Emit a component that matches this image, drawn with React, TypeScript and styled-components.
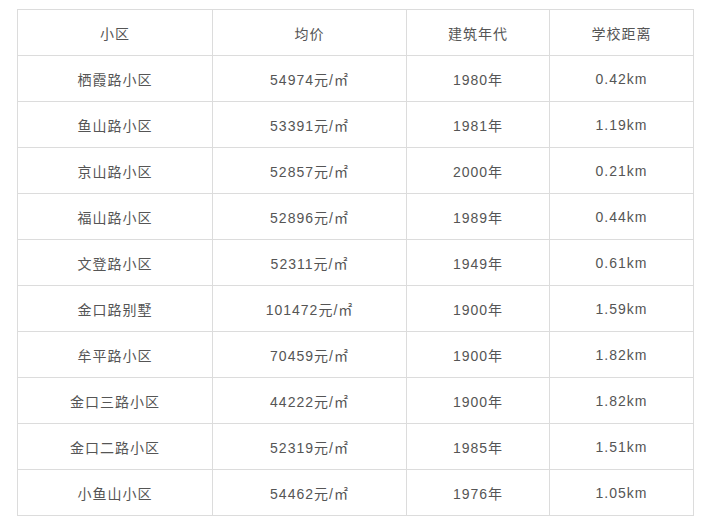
import styled, { createGlobalStyle } from "styled-components";

const GlobalStyle = createGlobalStyle`
  body {
    margin: 0;
    background: #fff;
    font-family: "Liberation Sans", "Noto Sans CJK SC", sans-serif;
  }
`;

const rows = [
  ["栖霞路小区", "54974", "1980年", "0.42km"],
  ["鱼山路小区", "53391", "1981年", "1.19km"],
  ["京山路小区", "52857", "2000年", "0.21km"],
  ["福山路小区", "52896", "1989年", "0.44km"],
  ["文登路小区", "52311", "1949年", "0.61km"],
  ["金口路别墅", "101472", "1900年", "1.59km"],
  ["牟平路小区", "70459", "1900年", "1.82km"],
  ["金口三路小区", "44222", "1900年", "1.82km"],
  ["金口二路小区", "52319", "1985年", "1.51km"],
  ["小鱼山小区", "54462", "1976年", "1.05km"],
];

const widths = [195, 194, 143, 144];
const headers = ["小区", "均价", "建筑年代", "学校距离"];

export default function App() {
  return (
    <Page>
      <GlobalStyle />
      <Table>
        <colgroup>
          {widths.map((w, i) => (
            <col key={i} style={{ width: w }} />
          ))}
        </colgroup>
        <thead>
          <tr>
            {headers.map((h) => (
              <Cell as="th" key={h}>
                {h}
              </Cell>
            ))}
          </tr>
        </thead>
        <tbody>
          {rows.map((r) => (
            <tr key={r[0]}>
              <Cell>{r[0]}</Cell>
              <Cell>{r[1]}元/㎡</Cell>
              <Cell>{r[2]}</Cell>
              <Cell>{r[3]}</Cell>
            </tr>
          ))}
        </tbody>
      </Table>
    </Page>
  );
}

const Page = styled.div`
  padding: 9px 0 0 17px;
`;

const Table = styled.table`
  border-collapse: separate;
  border-spacing: 0;
  table-layout: fixed;
  width: 677px;
  border-left: 1px solid #dcdcdc;
  border-top: 1px solid #dcdcdc;
`;

const Cell = styled.td`
  height: 46px;
  padding: 0;
  box-sizing: border-box;
  border-right: 1px solid #dcdcdc;
  border-bottom: 1px solid #dcdcdc;
  text-align: center;
  vertical-align: middle;
  font-size: 14px;
  font-weight: normal;
  letter-spacing: 1px;
  color: #555;
`;
